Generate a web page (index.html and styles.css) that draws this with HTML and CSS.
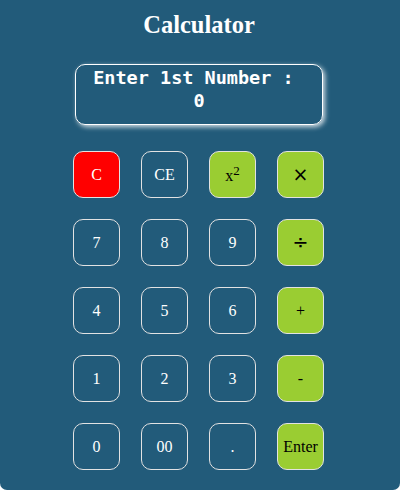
FILE: index.html
```html
<!DOCTYPE html>
<html>
<head>
<meta charset="utf-8">
<link rel="stylesheet" href="styles.css">
</head>
<body>
<div class="calc">
  <h1 class="title">Calculator</h1>
  <div class="display">
    <div class="prompt">Enter 1st Number :&nbsp;</div>
    <div class="value">0</div>
  </div>
  <div class="keys">
    <button class="key clear">C</button>
    <button class="key">CE</button>
    <button class="key op">x<sup>2</sup></button>
    <button class="key op sym">×</button>

    <button class="key">7</button>
    <button class="key">8</button>
    <button class="key">9</button>
    <button class="key op sym">÷</button>

    <button class="key">4</button>
    <button class="key">5</button>
    <button class="key">6</button>
    <button class="key op">+</button>

    <button class="key">1</button>
    <button class="key">2</button>
    <button class="key">3</button>
    <button class="key op">-</button>

    <button class="key">0</button>
    <button class="key">00</button>
    <button class="key">.</button>
    <button class="key op">Enter</button>
  </div>
</div>
</body>
</html>
```

FILE: styles.css
```css
html, body {
  margin: 0;
  padding: 0;
  background: #ffffff;
}

.calc {
  box-sizing: border-box;
  width: 400px;
  height: 490px;
  padding-right: 2px;
  background: #225b7a;
  border-radius: 0 0 7px 7px;
  display: flex;
  flex-direction: column;
  align-items: center;
  font-family: "Liberation Serif", "Times New Roman", serif;
  color: #ffffff;
}

.title {
  margin: 11px 0 0 0;
  font-size: 24.5px;
  line-height: 28px;
  font-weight: bold;
}

.display {
  box-sizing: border-box;
  margin-top: 25px;
  width: 248px;
  height: 61px;
  padding-top: 1px;
  border: 1.5px solid #ffffff;
  border-radius: 10px;
  box-shadow: 2px 2px 5px rgba(255, 255, 255, 0.8);
  font-family: "DejaVu Sans Mono", monospace;
  font-weight: bold;
  font-size: 18.5px;
  line-height: 23px;
  text-align: center;
}

.keys {
  margin-top: 26px;
  margin-left: -1px;
  display: grid;
  grid-template-columns: repeat(4, 47px);
  grid-auto-rows: 47px;
  gap: 21px;
}

.key {
  box-sizing: border-box;
  width: 47px;
  height: 47px;
  padding: 0;
  border: 1px solid #e2e2e2;
  border-radius: 10px;
  background: transparent;
  color: #ffffff;
  font-family: "Liberation Serif", "Times New Roman", serif;
  font-size: 16px;
  line-height: 1;
}

.key sup {
  font-size: 13px;
}

.clear {
  background: #ff0000;
}

.op {
  background: #9acd32;
  color: #000000;
}

.sym {
  font-family: "DejaVu Sans", sans-serif;
  font-size: 19px;
}
```
